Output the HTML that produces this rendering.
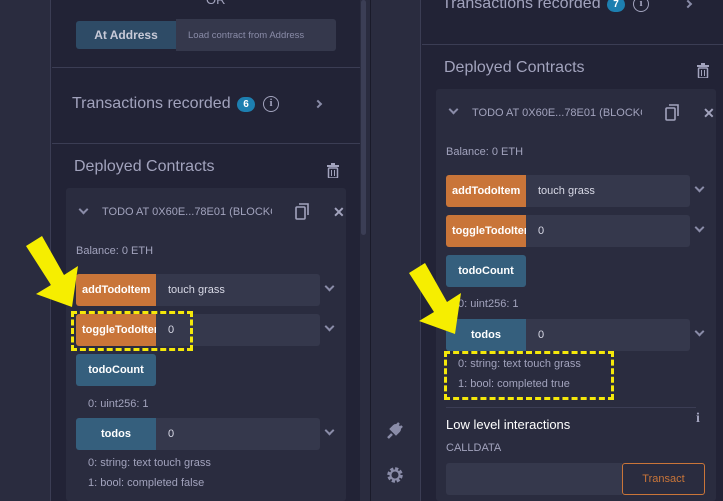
<!DOCTYPE html>
<html><head><meta charset="utf-8"><style>
*{margin:0;padding:0;box-sizing:border-box}
body{width:723px;height:501px;overflow:hidden;background:#222336;font-family:"Liberation Sans",sans-serif;position:relative;color:#a2a3bd}
.a{position:absolute}
.bar{background:#2a2c3f}
.t{position:absolute;white-space:nowrap}
.btn{position:absolute;color:#fff;font-size:11px;font-weight:bold;display:flex;align-items:center;justify-content:center;border-radius:3px 0 0 3px;overflow:hidden;white-space:nowrap}
.or{background:#c97539;justify-content:flex-start;padding-left:6px}
.bl{background:#355f7d}
.in{position:absolute;background:#35384c;border-radius:0 3px 3px 0;color:#d8d9e6;font-size:11px;display:flex;align-items:center;padding-left:12px}
.chev{position:absolute;width:7px;height:7px;border-right:2px solid #8a8ca8;border-bottom:2px solid #8a8ca8;transform:rotate(45deg)}
.line{position:absolute;height:1px;background:#3b3d54}
.badge{position:absolute;background:#1d7fb0;color:#fff;font-size:10px;font-weight:bold;border-radius:8px;width:18px;height:15px;text-align:center;line-height:15px}
.info{position:absolute;width:16px;height:16px;border:1.5px solid #a2a3bd;border-radius:50%;font-size:11px;text-align:center;line-height:13px;font-family:"Liberation Serif",serif;font-weight:bold}
.dash{position:absolute;border:3px dashed #f4e80a}
</style></head><body>
<div class="a bar" style="left:0;top:0;width:51px;height:501px;border-right:1px solid #3b3d54"></div>
<div class="a bar" style="left:370px;top:0;width:51px;height:501px;border-right:1px solid #3b3d54;border-left:1px solid #1a1b2a"></div>
<div class="a" style="left:360px;top:0;width:10px;height:501px;background:#2a2c3f"></div>
<div class="a" style="left:361px;top:0;width:5px;height:235px;background:#3b3e55;border-radius:3px"></div>

<!-- LEFT PANEL -->
<div class="t" style="left:206px;top:-8px;font-size:13px">OR</div>
<div class="btn" style="left:76px;top:21px;width:100px;height:28px;background:#2e4b66;color:#c8cad8;font-size:12px">At Address</div>
<div class="in" style="left:176px;top:19px;width:160px;height:32px;font-size:9.5px;color:#8a8ca8">Load contract from Address</div>
<div class="line" style="left:52px;top:67px;width:308px"></div>
<div class="t" style="left:72px;top:95px;font-size:16px">Transactions recorded</div>
<div class="badge" style="left:237px;top:97px">6</div>
<div class="info" style="left:263px;top:96px">i</div>
<div class="chev" style="left:315px;top:101px;transform:rotate(-45deg);width:6px;height:6px"></div>
<div class="line" style="left:52px;top:143px;width:308px"></div>
<div class="t" style="left:74px;top:158px;font-size:16px">Deployed Contracts</div>
<svg class="a" style="left:327px;top:163px" width="12" height="15" viewBox="0 0 12 15"><rect x="0" y="2" width="12" height="2" fill="#a2a3bd"/><rect x="4" y="0" width="4" height="2" fill="#a2a3bd"/><rect x="1.5" y="5" width="9" height="10" rx="1" fill="none" stroke="#a2a3bd" stroke-width="1.5"/><path d="M4.5 7v6M7.5 7v6" stroke="#a2a3bd"/></svg>
<div class="a" style="left:66px;top:188px;width:280px;height:313px;background:#2a2c3f;border-radius:3px"></div>
<div class="chev" style="left:80px;top:206px"></div>
<div class="t" style="left:102px;top:206px;font-size:11px;width:170px;overflow:hidden">TODO AT 0X60E...78E01 (BLOCKCHAIN)</div>
<svg class="a" style="left:295px;top:203px" width="15" height="17" viewBox="0 0 15 17"><rect x="1" y="4" width="9" height="12" rx="1" fill="none" stroke="#a2a3bd" stroke-width="1.6"/><path d="M4 1h9v11" fill="none" stroke="#a2a3bd" stroke-width="1.6"/></svg>
<div class="t" style="left:333px;top:204px;font-size:14px;font-weight:bold">✕</div>
<div class="t" style="left:76px;top:245px;font-size:11px">Balance: 0 ETH</div>
<div class="btn or" style="left:76px;top:274px;width:80px;height:32px">addTodoItem</div>
<div class="in" style="left:156px;top:274px;width:164px;height:32px">touch grass</div>
<div class="chev" style="left:326px;top:283px"></div>
<div class="btn or" style="left:76px;top:314px;width:80px;height:32px">toggleTodoItem</div>
<div class="in" style="left:156px;top:314px;width:164px;height:32px">0</div>
<div class="chev" style="left:326px;top:323px"></div>
<div class="btn bl" style="left:76px;top:354px;width:80px;height:32px;border-radius:3px">todoCount</div>
<div class="t" style="left:88px;top:398px;font-size:11px">0: uint256: 1</div>
<div class="btn bl" style="left:76px;top:418px;width:80px;height:32px">todos</div>
<div class="in" style="left:156px;top:418px;width:164px;height:32px">0</div>
<div class="chev" style="left:326px;top:427px"></div>
<div class="t" style="left:88px;top:457px;font-size:11px">0: string: text touch grass</div>
<div class="t" style="left:88px;top:477px;font-size:11px">1: bool: completed false</div>
<div class="dash" style="left:71px;top:311px;width:122px;height:40px"></div>
<svg class="a" style="left:0;top:0" width="100" height="320"><polygon points="26,246 42,236 64,275 78,266 72,307 36,294 51,285" fill="#f6ee00"/></svg>

<!-- RIGHT PANEL -->
<div class="t" style="left:442px;top:-5px;font-size:16px">Transactions recorded</div>
<div class="badge" style="left:607px;top:-3px">7</div>
<div class="info" style="left:633px;top:-4px">i</div>
<div class="chev" style="left:685px;top:1px;transform:rotate(-45deg);width:6px;height:6px"></div>
<div class="line" style="left:422px;top:44px;width:301px"></div>
<div class="t" style="left:444px;top:59px;font-size:16px">Deployed Contracts</div>
<svg class="a" style="left:697px;top:63px" width="12" height="15" viewBox="0 0 12 15"><rect x="0" y="2" width="12" height="2" fill="#a2a3bd"/><rect x="4" y="0" width="4" height="2" fill="#a2a3bd"/><rect x="1.5" y="5" width="9" height="10" rx="1" fill="none" stroke="#a2a3bd" stroke-width="1.5"/><path d="M4.5 7v6M7.5 7v6" stroke="#a2a3bd"/></svg>
<div class="a" style="left:436px;top:89px;width:280px;height:412px;background:#2a2c3f;border-radius:3px"></div>
<div class="chev" style="left:450px;top:106px"></div>
<div class="t" style="left:472px;top:107px;font-size:11px;width:170px;overflow:hidden">TODO AT 0X60E...78E01 (BLOCKCHAIN)</div>
<svg class="a" style="left:665px;top:104px" width="15" height="17" viewBox="0 0 15 17"><rect x="1" y="4" width="9" height="12" rx="1" fill="none" stroke="#a2a3bd" stroke-width="1.6"/><path d="M4 1h9v11" fill="none" stroke="#a2a3bd" stroke-width="1.6"/></svg>
<div class="t" style="left:703px;top:105px;font-size:14px;font-weight:bold">✕</div>
<div class="t" style="left:446px;top:146px;font-size:11px">Balance: 0 ETH</div>
<div class="btn or" style="left:446px;top:175px;width:80px;height:32px">addTodoItem</div>
<div class="in" style="left:526px;top:175px;width:164px;height:32px">touch grass</div>
<div class="chev" style="left:696px;top:184px"></div>
<div class="btn or" style="left:446px;top:215px;width:80px;height:32px">toggleTodoItem</div>
<div class="in" style="left:526px;top:215px;width:164px;height:32px">0</div>
<div class="chev" style="left:696px;top:224px"></div>
<div class="btn bl" style="left:446px;top:255px;width:80px;height:32px;border-radius:3px">todoCount</div>
<div class="t" style="left:458px;top:298px;font-size:11px">0: uint256: 1</div>
<div class="btn bl" style="left:446px;top:319px;width:80px;height:32px">todos</div>
<div class="in" style="left:526px;top:319px;width:164px;height:32px">0</div>
<div class="chev" style="left:696px;top:328px"></div>
<div class="t" style="left:458px;top:358px;font-size:11px">0: string: text touch grass</div>
<div class="t" style="left:458px;top:378px;font-size:11px">1: bool: completed true</div>
<div class="dash" style="left:444px;top:351px;width:170px;height:49px"></div>
<div class="line" style="left:446px;top:407px;width:250px"></div>
<div class="t" style="left:446px;top:417px;font-size:13px;color:#fff">Low level interactions</div>
<div class="t" style="left:696px;top:411px;font-size:14px;font-weight:bold;font-family:'Liberation Serif',serif">i</div>
<div class="t" style="left:446px;top:442px;font-size:11px">CALLDATA</div>
<div class="a" style="left:446px;top:463px;width:176px;height:32px;background:#35384c;border-radius:3px 0 0 3px"></div>
<div class="a" style="left:622px;top:463px;width:83px;height:32px;border:1px solid #c97539;border-radius:3px;color:#c97539;font-size:11px;text-align:center;line-height:30px">Transact</div>
<svg class="a" style="left:385px;top:420px" width="20" height="20" viewBox="0 0 20 20"><path d="M3 18l4-4M6 9l5 5 3-3c1-1 1-3 0-4l-1-1c-1-1-3-1-4 0z M11 6l3-3M14 9l3-3" stroke="#8a8ca8" stroke-width="2.5" fill="#8a8ca8"/></svg>
<svg class="a" style="left:386px;top:466px" width="18" height="18" viewBox="0 0 18 18"><circle cx="9" cy="9" r="6" fill="none" stroke="#8a8ca8" stroke-width="3.5" stroke-dasharray="3 1.7"/><circle cx="9" cy="9" r="4.5" fill="none" stroke="#8a8ca8" stroke-width="2"/></svg>
<svg class="a" style="left:0;top:0" width="723" height="501" style="pointer-events:none"><polygon points="409,273 425,263 447,302 461,293 455,334 419,321 434,312" fill="#f6ee00"/></svg>
</body></html>
